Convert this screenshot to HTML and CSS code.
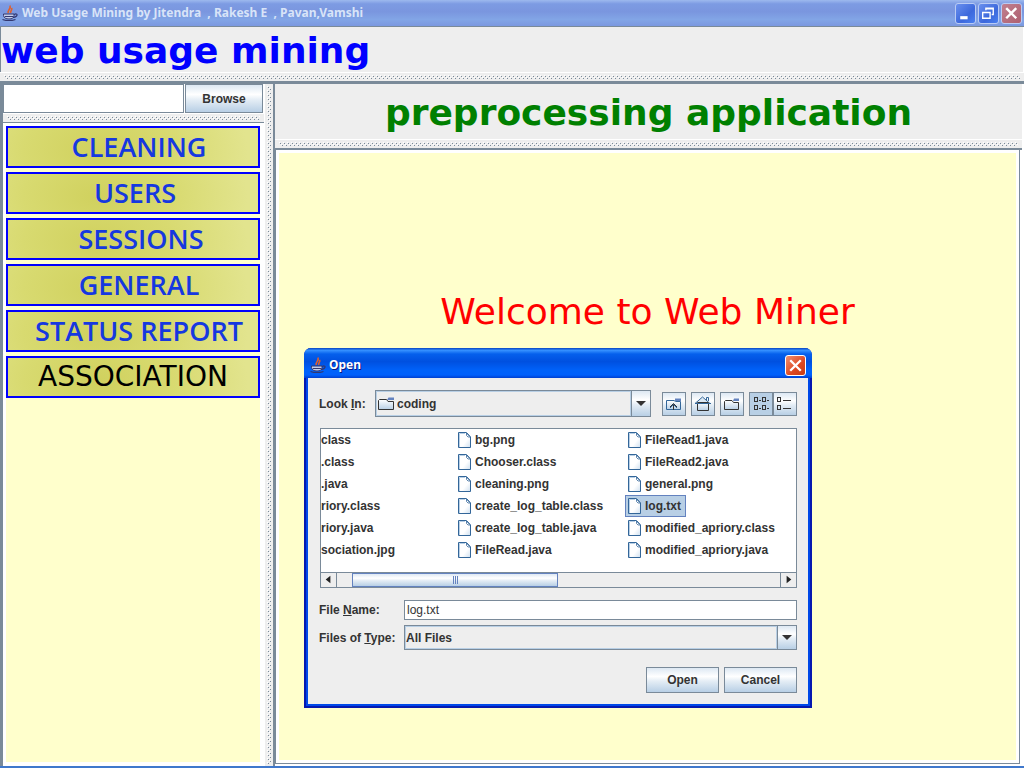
FILE: index.html
```html
<!DOCTYPE html>
<html lang="en">
<head>
<meta charset="utf-8">
<title>Web Usage Mining</title>
<link rel="stylesheet" href="styles.css">
</head>
<body>
<svg class="defs" aria-hidden="true">
  <defs>
    <symbol id="cup" viewBox="0 0 16 16">
      <path d="M6.500 8C4.500 5.500 9.500 4 8 0.500M9 8C7.500 6 11 5 9.500 3" fill="none" stroke="#e0602c" stroke-width="1.600"/>
      <path d="M1.500 9H12V10.500C12 13 10 14 7 14S2 13 1.500 10.500Z" fill="#c4cdea" stroke="#33376f"/>
      <path d="M12 9.500C16 7.500 16.500 11.500 11 12.500" fill="none" stroke="#33376f" stroke-width="1.200"/>
      <path d="M3 11.500H11M0.500 14.500C4 16 10 16 13.500 14.500" fill="none" stroke="#33376f" stroke-width="1.200"/>
    </symbol>
    <linearGradient id="paper" x1="0" y1="0" x2="1" y2="1"><stop offset="0" stop-color="#fff"/><stop offset=".6" stop-color="#fff"/><stop offset="1" stop-color="#cfe0f0"/></linearGradient>
    <linearGradient id="fold" x1="0" y1="0" x2="0" y2="1"><stop offset="0" stop-color="#fff"/><stop offset="1" stop-color="#b8cfe5"/></linearGradient>
    <symbol id="file" viewBox="0 0 13 16">
      <path d="M.5 .5H8.500L12.500 5V15.500H.5Z" fill="url(#paper)" stroke="#336699"/>
      <path d="M1.500 15V1.500H7" fill="none" stroke="#b8cfe5"/>
      <path d="M8.500 1V3.500L10 5H12" fill="none" stroke="#336699" stroke-width=".8"/>
      <path d="M8.500 1L12 4.500" stroke="#336699"/>
    </symbol>
    <symbol id="folder" viewBox="0 0 16 13">
      <path d="M.5 12.500V3.500L1.500 2.500H8.500L10 4.500H15.500V12.500Z" fill="url(#fold)" stroke="#333"/>
      <path d="M9 3L10.500 .5H16V3Z" fill="#6382bf"/>
    </symbol>
  </defs>
</svg>

<header class="titlebar">
  <svg class="cup"><use href="#cup"/></svg>
  <span class="titlebar-text">Web Usage Mining by Jitendra&nbsp; , Rakesh E&nbsp; , Pavan,Vamshi</span>
  <button class="win" aria-label="Minimize"><svg viewBox="0 0 18 18"><path d="M4 13H11" stroke="#fff" stroke-width="3"/></svg></button>
  <button class="win" aria-label="Restore"><svg viewBox="0 0 18 18"><path d="M3.500 8H10.500V13.500H3.500ZM3 8H11M6.500 6V4H13.500V10H12M6 4.500H14" fill="none" stroke="#fff" stroke-width="1.300"/></svg></button>
  <button class="win win-close" aria-label="Close"><svg viewBox="0 0 18 18"><path d="M4 4L13.500 13.500M13.500 4L4 13.500" stroke="#fff" stroke-width="2.300"/></svg></button>
</header>

<div class="banner"><h1>web usage mining</h1></div>
<div class="bar"></div>

<div class="workspace">
  <aside class="sidebar">
    <form class="browse">
      <input type="text" aria-label="Log file path">
      <button type="button" class="btn">Browse</button>
    </form>
    <div class="bar bar-side"></div>
    <nav class="menu">
      <button class="menu-item">CLEANING</button>
      <button class="menu-item menu-users">USERS</button>
      <button class="menu-item menu-sessions">SESSIONS</button>
      <button class="menu-item">GENERAL</button>
      <button class="menu-item">STATUS REPORT</button>
      <button class="menu-item menu-assoc">ASSOCIATION</button>
    </nav>
  </aside>
  <div class="splitter"></div>
  <main class="main">
    <h2>preprocessing application</h2>
    <div class="bar bar-main"></div>
    <div class="canvas-frame"><div class="canvas"><p>Welcome to Web Miner</p></div></div>

    <section class="dialog" role="dialog" aria-labelledby="dlg-title">
      <div class="dialog-title">
        <svg class="cup"><use href="#cup"/></svg>
        <span id="dlg-title">Open</span>
        <button class="dialog-close" aria-label="Close dialog"><svg viewBox="0 0 18 18"><path d="M4 4L14 14M14 4L4 14" stroke="#fff" stroke-width="2.200"/></svg></button>
      </div>
      <div class="dialog-body">
        <div class="look">
          <label for="look">Look <u>I</u>n:</label>
          <div class="combo combo-look">
            <svg class="combo-icon"><use href="#folder"/></svg>
            <select id="look"><option>coding</option></select>
            <span class="arrow"></span>
          </div>
          <div class="tools">
            <button class="tool" aria-label="Up one level"><svg viewBox="0 0 24 24"><path d="M4.500 17.500V8.500H12L13.500 9.500H18.500V17.500Z" fill="url(#fold)" stroke="#336699"/><path d="M13 6.500H19V9H13Z" fill="#6382bf"/><path d="M11.500 18V12M8 15L11.500 11.500L15 15" fill="none" stroke="#333"/><path d="M8 16L11.500 12.500L15 16" fill="none" stroke="#336699"/></svg></button>
            <button class="tool" aria-label="Home"><svg viewBox="0 0 24 24"><path d="M4 11.500L11.500 5L19 11.500" fill="#dce8f3" stroke="#336699"/><path d="M15.500 8V5.500H17.500V9" fill="none" stroke="#336699"/><path d="M6.500 10.500H17.500V18.500H6.500Z" fill="url(#fold)" stroke="#333"/><path d="M4 11.500H20" stroke="#336699"/></svg></button>
            <button class="tool" aria-label="New folder"><svg viewBox="0 0 24 24"><path d="M4.500 17.500V9.500L5.500 8.500H12L13.500 10.500H18.500V17.500Z" fill="url(#fold)" stroke="#333"/><path d="M13 9L14 6.500H19V9Z" fill="#6382bf"/></svg></button>
            <div class="views">
              <button class="tool tool-on" aria-label="List view"><svg viewBox="0 0 24 24" shape-rendering="crispEdges"><path d="M5.500 5.500H8.500V9.500H5.500ZM13.500 5.500H16.500V9.500H13.500ZM5.500 13.500H8.500V17.500H5.500ZM13.500 13.500H16.500V17.500H13.500ZM10 8.500H12M18 8.500H20M10 16.500H12M18 16.500H20" fill="none" stroke="#333"/></svg></button>
              <button class="tool" aria-label="Details view"><svg viewBox="0 0 24 24" shape-rendering="crispEdges"><path d="M4.500 5.500H7.500V9.500H4.500ZM4.500 13.500H7.500V17.500H4.500ZM10 8.500H18M10 16.500H18" fill="none" stroke="#333"/></svg></button>
            </div>
          </div>
        </div>

        <div class="list">
          <div class="columns">
            <ul class="col col-cut"><li>class</li><li>.class</li><li>.java</li><li>riory.class</li><li>riory.java</li><li>sociation.jpg</li></ul>
            <ul class="col">
              <li><svg class="file"><use href="#file"/></svg>bg.png</li>
              <li><svg class="file"><use href="#file"/></svg>Chooser.class</li>
              <li><svg class="file"><use href="#file"/></svg>cleaning.png</li>
              <li><svg class="file"><use href="#file"/></svg>create_log_table.class</li>
              <li><svg class="file"><use href="#file"/></svg>create_log_table.java</li>
              <li><svg class="file"><use href="#file"/></svg>FileRead.java</li>
            </ul>
            <ul class="col">
              <li><svg class="file"><use href="#file"/></svg>FileRead1.java</li>
              <li><svg class="file"><use href="#file"/></svg>FileRead2.java</li>
              <li><svg class="file"><use href="#file"/></svg>general.png</li>
              <li class="selected"><svg class="file"><use href="#file"/></svg>log.txt</li>
              <li><svg class="file"><use href="#file"/></svg>modified_apriory.class</li>
              <li><svg class="file"><use href="#file"/></svg>modified_apriory.java</li>
            </ul>
          </div>
          <div class="scroll">
            <button class="scroll-btn" aria-label="Scroll left"><svg viewBox="0 0 16 14"><path d="M10 3V11L5 7Z" fill="#222"/></svg></button>
            <div class="track"><div class="thumb"></div></div>
            <button class="scroll-btn scroll-right" aria-label="Scroll right"><svg viewBox="0 0 16 14"><path d="M6 3V11L11 7Z" fill="#222"/></svg></button>
          </div>
        </div>

        <div class="fields">
          <label for="fname">File <u>N</u>ame:</label>
          <input id="fname" type="text" value="log.txt">
          <label for="ftype">Files of <u>T</u>ype:</label>
          <div class="combo">
            <select id="ftype"><option>All Files</option></select>
            <span class="arrow"></span>
          </div>
        </div>

        <div class="actions">
          <button class="btn">Open</button>
          <button class="btn">Cancel</button>
        </div>
      </div>
    </section>
  </main>
</div>
</body>
</html>
```

FILE: styles.css
```css
* { box-sizing: border-box; }

:root {
  --line: #7a8a99;
  --face: #eeeeee;
  --cream: #ffffcc;
  --metal: linear-gradient(#dde8f3 0, #ffffff 35%, #e4edf5 55%, #b8cfe5 100%);
  --bumps: url("data:image/svg+xml,%3Csvg xmlns='http://www.w3.org/2000/svg' width='4' height='4' shape-rendering='crispEdges'%3E%3Cpath fill='%23fff' d='M0 0h1v1H0zM2 2h1v1H2z'/%3E%3Cpath fill='%237a8a99' d='M1 1h1v1H1zM3 3h1v1H3z'/%3E%3C/svg%3E");
}

body {
  margin: 0;
  height: 100vh;
  display: flex;
  flex-direction: column;
  overflow: hidden;
  background: var(--face);
  border-bottom: 2px solid #3f78cc;
  color: #333;
  font: bold 12px/16px "Liberation Sans", Arial, sans-serif;
}

button, input, select { font: inherit; color: inherit; margin: 0; border-radius: 0; }
button { padding: 0; }
svg { display: block; }
h1, h2, p, ul { margin: 0; padding: 0; }
.defs { position: absolute; width: 0; height: 0; }

/* Main window title */
.titlebar {
  flex: none;
  display: flex;
  align-items: center;
  gap: 2px;
  height: 27px;
  padding: 0 2px;
  background: linear-gradient(#9db9ee 0, #7d9be3 15%, #7a96df 45%, #82a5e6 75%, #7b98e0 100%);
  border-bottom: 1px solid var(--line);
}
.titlebar-text {
  flex: 1;
  padding-left: 2px;
  color: #d8e4f8;
  font: bold 12px/16px "Noto Sans", sans-serif;
}
.cup { width: 16px; height: 16px; flex: none; }
.win {
  width: 21px;
  height: 21px;
  border: 1px solid #b9cbf4;
  border-radius: 3px;
  background: linear-gradient(135deg, #6a90ee, #3c68dc 60%, #4a80f0);
}
.win-close { background: linear-gradient(135deg, #c08090, #ae6070); }

.banner { flex: none; padding-top: 2px; border-left: 1px solid var(--line); border-right: 1px solid #fff; }
.banner h1 { color: #00f; font: bold 36px/43px "DejaVu Sans", Verdana, sans-serif; }

/* Draggable dividers */
.bar {
  flex: none;
  height: 12px;
  border-top: 1px solid #fff;
  border-bottom: 3px solid var(--line);
  padding: 2px 4px;
  background: var(--bumps) content-box, var(--face);
}
.bar-side { height: 10px; border-bottom-width: 1px; }
.bar-main { height: 11px; border-bottom-width: 2px; }
.splitter {
  flex: none;
  width: 11px;
  padding: 2px;
  border-left: 1px solid #fff;
  border-right: 2px solid var(--line);
  background: var(--bumps) content-box, var(--face);
}

.workspace { flex: 1; display: flex; min-height: 0; }

/* Left column */
.sidebar {
  flex: none;
  width: 264px;
  display: flex;
  flex-direction: column;
  border-left: 3px solid var(--line);
  background: #fff;
}
.browse { display: flex; gap: 1px; height: 29px; padding-right: 1px; }
.browse input { flex: 1; min-width: 0; border: 1px solid var(--line); background: #fff; padding: 0 4px; }
.browse .btn { width: 78px; }
.btn { border: 1px solid var(--line); background: var(--metal); }
.menu {
  flex: 1;
  display: flex;
  flex-direction: column;
  gap: 4px;
  margin: 3px 4px 4px 3px;
  background: var(--cream);
}
.menu-item {
  height: 42px;
  padding: 0 0 0 12px;
  border: 2px solid #00f;
  background: radial-gradient(ellipse 150px 90px at 36% 60%, #d0d15e, #d8da70 50%, #e2e48e 100%);
  color: #1638e0;
  font: 600 27px/38px "Open Sans", sans-serif;
}
.menu-users { padding-left: 4px; }
.menu-sessions { padding-left: 16px; }
.menu-assoc { padding: 0; color: #000; font: 28px/38px "DejaVu Sans", sans-serif; }

/* Right pane */
.main { position: relative; flex: 1; min-width: 0; display: flex; flex-direction: column; border-right: 2px solid #fff; }
.main h2 { padding-top: 3px; color: #008000; text-align: center; font: bold 36px/52px "DejaVu Sans", Verdana, sans-serif; }
.canvas-frame { flex: 1; display: flex; margin: 0 2px 2px 0; padding: 3px; background: #fff; border: 1px solid var(--line); border-top: 0; outline: 2px solid #fff; outline-offset: 0; clip-path: inset(0 -2px -2px 0); }
.canvas { flex: 1; background: var(--cream); padding-top: 136px; }
.canvas p { text-align: center; color: #f00; font: 36px/46px "DejaVu Sans", Verdana, sans-serif; }

/* File chooser window */
.dialog {
  position: absolute;
  left: 29px;
  top: 264px;
  width: 508px;
  padding: 0 2px 2px;
  border: 2px solid #0618b0;
  border-top: 0;
  border-radius: 7px 7px 0 0;
  background: #0048e8;
}
.dialog-title {
  display: flex;
  align-items: center;
  gap: 3px;
  height: 30px;
  margin: 0 -4px;
  padding: 4px 6px 0 6px;
  border-radius: 7px 7px 0 0;
  background: linear-gradient(#0842c0 0, #3490ff 8%, #0560ec 20%, #0050e0 45%, #0062fa 75%, #0060fc 90%, #0040d0 100%);
  color: #fff;
  font: bold 12px/16px "Noto Sans", sans-serif;
  text-shadow: 1px 1px 0 #0a1883;
}
.dialog-title span { flex: 1; }
.dialog-close { width: 21px; height: 21px; border: 1px solid #fff; border-radius: 3px; background: linear-gradient(135deg, #f09070, #dd4822 60%, #c83c14); }
.dialog-body { padding: 12px 11px 11px; background: var(--face); }

.look { display: flex; align-items: center; margin-bottom: 11px; }
.look label { width: 56px; }
.combo { position: relative; display: flex; height: 25px; border: 1px solid var(--line); background: var(--face); }
.combo select {
  flex: 1;
  appearance: none;
  border: 1px solid #b8cfe5;
  background: transparent;
  padding: 0;
  outline: 0;
}
.combo-look { width: 276px; height: 27px; }
.combo-look select { padding-left: 20px; }
.combo-icon { position: absolute; left: 2px; top: 6px; width: 16px; height: 13px; }
.arrow { display: grid; place-items: center; width: 19px; border-left: 1px solid var(--line); background: var(--metal); pointer-events: none; }
.arrow::before { content: ""; border: 5px solid transparent; border-top-color: #333; border-bottom: 0; }
.tools { flex: 1; display: flex; justify-content: flex-end; gap: 5px; }
.views { display: flex; }
.tool { width: 24px; height: 24px; border: 1px solid var(--line); background: var(--metal); }
.tool svg { width: 24px; height: 24px; margin: -1px; }
.tool-on { background: #b8cfe5; }

.list { margin: 0 0 12px 1px; border: 1px solid var(--line); background: #fff; }
.columns { display: grid; grid-template-columns: 134px 170px 1fr; height: 143px; overflow: hidden; }
.col { list-style: none; white-space: nowrap; }
.col li { display: flex; align-items: center; gap: 4px; width: max-content; height: 22px; padding: 0 5px 0 3px; }
.col-cut li { padding-left: 0; }
.file { width: 13px; height: 16px; }
.col .selected { background: #b8cfe5; box-shadow: inset 0 0 0 1px #6382bf; }

.scroll { display: flex; height: 15px; border-top: 1px solid var(--line); background: var(--face); }
.scroll-btn { width: 16px; border: 0; border-right: 1px solid var(--line); background: var(--face); }
.scroll-right { border-right: 0; border-left: 1px solid var(--line); }
.track { flex: 1; padding-left: 15px; }
.thumb {
  width: 206px;
  height: 14px;
  border: 1px solid #6382bf;
  background:
    repeating-linear-gradient(90deg, #6382bf 0 1px, transparent 1px 2px) center / 5px 8px no-repeat,
    var(--metal);
}

.fields { display: grid; grid-template-columns: 85px 1fr; align-items: center; row-gap: 5px; margin-bottom: 17px; }
.fields input { min-width: 0; height: 20px; padding: 0 2px; border: 1px solid var(--line); background: #fff; font-weight: normal; }
.actions { display: flex; justify-content: flex-end; gap: 5px; }
.actions .btn { width: 73px; height: 26px; }
```
